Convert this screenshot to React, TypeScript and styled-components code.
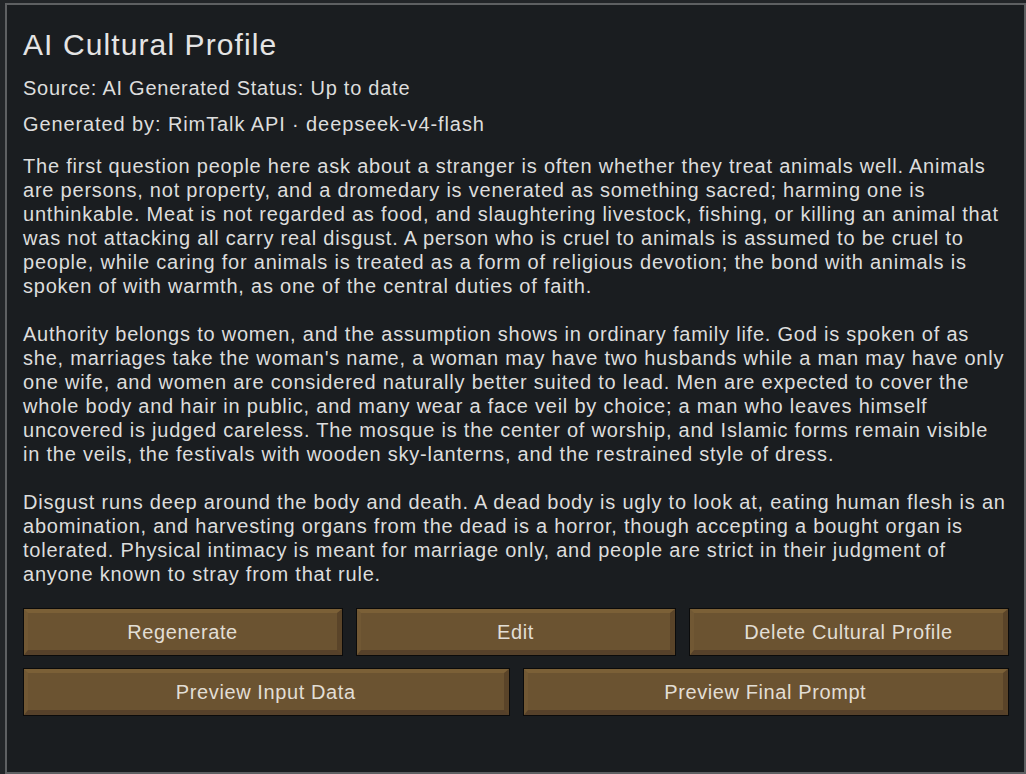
import styled, { createGlobalStyle } from 'styled-components'

const GlobalStyle = createGlobalStyle`
  html, body {
    margin: 0;
    padding: 0;
    background: #222528;
  }
  body {
    font-family: "Liberation Sans", Arial, sans-serif;
  }
`

const paragraphs = [
  'The first question people here ask about a stranger is often whether they treat animals well. Animals are persons, not property, and a dromedary is venerated as something sacred; harming one is unthinkable. Meat is not regarded as food, and slaughtering livestock, fishing, or killing an animal that was not attacking all carry real disgust. A person who is cruel to animals is assumed to be cruel to people, while caring for animals is treated as a form of religious devotion; the bond with animals is spoken of with warmth, as one of the central duties of faith.',
  "Authority belongs to women, and the assumption shows in ordinary family life. God is spoken of as she, marriages take the woman's name, a woman may have two husbands while a man may have only one wife, and women are considered naturally better suited to lead. Men are expected to cover the whole body and hair in public, and many wear a face veil by choice; a man who leaves himself uncovered is judged careless. The mosque is the center of worship, and Islamic forms remain visible in the veils, the festivals with wooden sky-lanterns, and the restrained style of dress.",
  'Disgust runs deep around the body and death. A dead body is ugly to look at, eating human flesh is an abomination, and harvesting organs from the dead is a horror, though accepting a bought organ is tolerated. Physical intimacy is meant for marriage only, and people are strict in their judgment of anyone known to stray from that rule.',
]

const Window = styled.div`
  box-sizing: border-box;
  margin: 3px 0 0 5px;
  width: 1021px;
  height: 771px;
  background: #1a1d20;
  border: 2px solid #5e6062;
  padding: 22px 15px 0 16px;
  display: flex;
  flex-direction: column;
  color: #dddddd;
`

const Title = styled.h1`
  margin: 0;
  font-size: 30px;
  font-weight: normal;
  line-height: 36px;
  letter-spacing: 1.1px;
  color: #e4e4e4;
`

const Meta = styled.div<{ $gap: number; $spacing: number }>`
  margin-top: ${p => p.$gap}px;
  font-size: 20px;
  line-height: 24px;
  letter-spacing: ${p => p.$spacing}px;
`

const Body = styled.div`
  margin-top: 18px;
  display: flex;
  flex-direction: column;
  gap: 24px;
`

const Paragraph = styled.p`
  margin: 0;
  font-size: 20px;
  line-height: 24px;
  letter-spacing: 0.78px;
`

const ButtonRow = styled.div<{ $cols: number; $top: number }>`
  display: grid;
  grid-template-columns: repeat(${p => p.$cols}, 1fr);
  column-gap: 13px;
  margin-top: ${p => p.$top}px;
  height: 48px;
`

const Button = styled.button`
  box-sizing: border-box;
  padding: 0;
  border: 1px solid #0b0b0b;
  background: #6b5331;
  cursor: pointer;
  display: flex;
  font-family: inherit;
`

const Bevel = styled.span`
  box-sizing: border-box;
  flex: 1;
  display: flex;
  align-items: center;
  justify-content: center;
  padding-top: 1px;
  border-style: solid;
  border-width: 4px 5px 5px 4px;
  border-color: #7b6037 #5a4429 #56412a #715834;
  font-size: 20px;
  letter-spacing: 0.6px;
  color: #e2ded5;
`

export default function App() {
  return (
    <>
      <GlobalStyle />
      <Window>
        <Title>AI Cultural Profile</Title>
        <Meta $gap={13} $spacing={0.75}>Source: AI Generated Status: Up to date</Meta>
        <Meta $gap={12} $spacing={0.9}>Generated by: RimTalk API · deepseek-v4-flash</Meta>
        <Body>
          {paragraphs.map((text, i) => (
            <Paragraph key={i}>{text}</Paragraph>
          ))}
        </Body>
        <ButtonRow $cols={3} $top={22}>
          <Button><Bevel>Regenerate</Bevel></Button>
          <Button><Bevel>Edit</Bevel></Button>
          <Button><Bevel>Delete Cultural Profile</Bevel></Button>
        </ButtonRow>
        <ButtonRow $cols={2} $top={12}>
          <Button><Bevel>Preview Input Data</Bevel></Button>
          <Button><Bevel>Preview Final Prompt</Bevel></Button>
        </ButtonRow>
      </Window>
    </>
  )
}
